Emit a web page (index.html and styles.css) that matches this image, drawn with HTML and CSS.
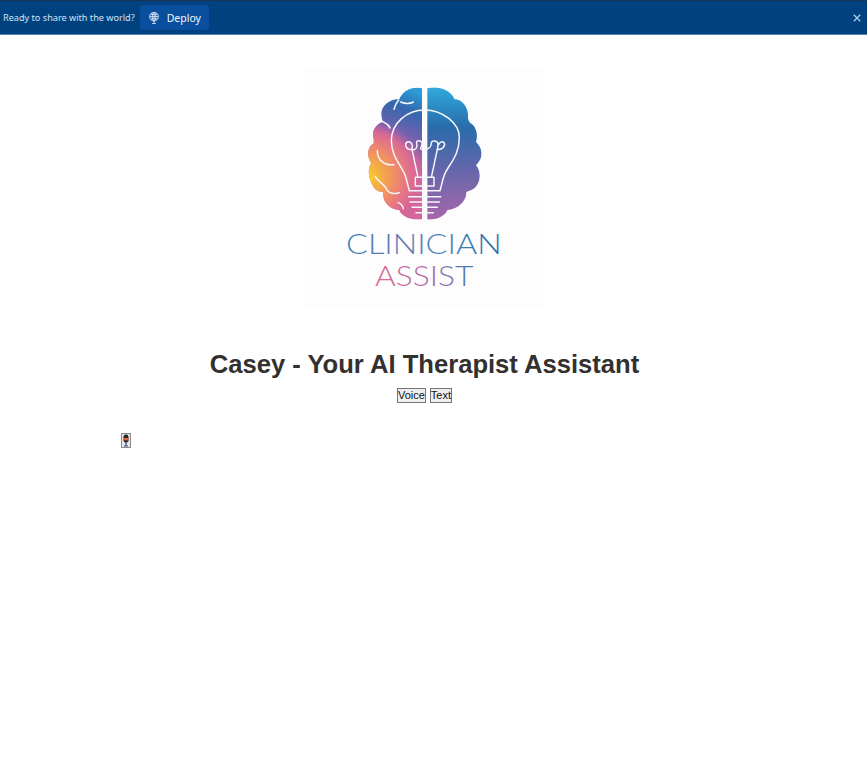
FILE: index.html
```html
<!DOCTYPE html>
<html lang="en">
<head>
<meta charset="utf-8">
<title>Casey - Your AI Therapist Assistant</title>
<link rel="stylesheet" href="styles.css">
</head>
<body>
<header class="deploy-bar">
  <span class="deploy-text">Ready to share with the world?</span>
  <button class="deploy-btn" type="button">
    <svg class="deploy-icon" viewBox="0 0 12 12" aria-hidden="true">
      <circle cx="6" cy="4.6" r="4.4"/>
      <ellipse cx="6" cy="4.6" rx="1.8" ry="4.4"/>
      <path d="M1.6 4.6h8.8M2.4 2.4h7.2M2.4 6.8h7.2M6 .2V11.6M4 11.6h4"/>
    </svg>
    <span>Deploy</span>
  </button>
  <button class="close-btn" type="button" aria-label="Close">
    <svg viewBox="0 0 8 8" aria-hidden="true"><path d="M.8.8l6.4 6.4M7.2.8L.8 7.2"/></svg>
  </button>
</header>
<main class="page">
  <svg class="logo" viewBox="12 18 723 723" role="img" aria-label="Clinician Assist logo">
    <defs>
      <linearGradient id="base" x1="0" y1="85" x2="0" y2="478" gradientUnits="userSpaceOnUse">
        <stop offset="0" stop-color="#2fa9dc"/>
        <stop offset=".3" stop-color="#2a6bab"/>
        <stop offset=".65" stop-color="#6a66aa"/>
        <stop offset="1" stop-color="#a866ac"/>
      </linearGradient>
      <radialGradient id="warm" cx="205" cy="350" r="170" gradientUnits="userSpaceOnUse">
        <stop offset="0" stop-color="#f9d31e"/>
        <stop offset=".16" stop-color="#f6b63c"/>
        <stop offset=".5" stop-color="#ef8a6a"/>
        <stop offset=".8" stop-color="#dd6a92" stop-opacity=".92"/>
        <stop offset="1" stop-color="#c8659f" stop-opacity="0"/>
      </radialGradient>
      <linearGradient id="leftTop" x1="335" y1="90" x2="255" y2="290" gradientUnits="userSpaceOnUse">
        <stop offset="0" stop-color="#2a9bd4"/>
        <stop offset=".28" stop-color="#3467ad"/>
        <stop offset=".65" stop-color="#7c60b0"/>
        <stop offset="1" stop-color="#d3669a"/>
      </linearGradient>
      <linearGradient id="word1" x1="138" y1="0" x2="605" y2="0" gradientUnits="userSpaceOnUse">
        <stop offset="0" stop-color="#3f7fb5"/>
        <stop offset=".35" stop-color="#6a78b4"/>
        <stop offset=".65" stop-color="#4f86b8"/>
        <stop offset="1" stop-color="#2a6ba6"/>
      </linearGradient>
      <linearGradient id="word2" x1="225" y1="0" x2="520" y2="0" gradientUnits="userSpaceOnUse">
        <stop offset="0" stop-color="#e0688f"/>
        <stop offset=".5" stop-color="#b46aa8"/>
        <stop offset="1" stop-color="#3f7fb5"/>
      </linearGradient>
      <clipPath id="brainClip">
        <path d="M366 85C336 78 308 92 298 118C272 116 244 135 244 162C244 172 246 180 250 186C230 190 214 212 220 232C222 240 222 246 220 252C204 258 198 288 214 310C204 322 202 352 220 380C228 392 240 396 250 396C246 425 268 448 298 450C304 468 330 482 366 478Z"/>
        <path d="M382 85C410 78 448 84 464 118C486 118 506 142 504 172C504 178 506 182 510 188C526 196 536 220 528 246C546 262 554 290 528 316C546 335 542 378 514 390C508 392 504 394 499 396C500 425 472 448 442 450C438 466 410 482 382 478Z"/>
      </clipPath>
    </defs>
    <rect class="logo-bg" x="12" y="18" width="723" height="723"/>
    <g clip-path="url(#brainClip)">
      <rect x="372" y="70" width="190" height="420" fill="url(#base)"/>
      <rect x="190" y="70" width="183" height="420" fill="url(#leftTop)"/>
      <rect x="190" y="170" width="183" height="320" fill="url(#warm)"/>
    </g>
    <g class="logo-line">
      <path d="M374 150C320 150 274 190 274 242C274 285 298 310 312 338C320 355 322 372 328 392H420C426 372 428 355 436 338C450 310 478 285 478 232C478 190 428 150 374 150Z"/>
      <path d="M346 378V352H402V378H346ZM354 352L336 268M394 352L412 268"/>
      <path d="M336 268C318 272 312 252 322 246C334 242 340 256 336 268C346 272 354 262 350 250C346 238 370 240 366 254C362 268 356 268 372 268C384 268 394 262 394 250C394 240 414 240 414 254C412 264 414 270 412 268C426 272 438 256 432 248C424 240 412 252 412 268"/>
      <path d="M326 410H422M330 426H418M336 442H412M348 458H400"/>
      <path d="M302 126C316 132 326 134 340 126M296 120C288 130 284 138 282 148M250 186C258 190 266 192 270 204M232 272C232 298 250 318 282 314M226 350C236 368 256 372 262 392C272 402 288 402 298 398M294 428C300 430 308 434 310 446"/>
    </g>
    <text class="logo-word" x="138" y="581" fill="url(#word1)" textLength="467" lengthAdjust="spacingAndGlyphs">CLINICIAN</text>
    <text class="logo-word" x="225" y="677" fill="url(#word2)" textLength="295" lengthAdjust="spacingAndGlyphs">ASSIST</text>
  </svg>
  <h1 class="title">Casey - Your AI Therapist Assistant</h1>
  <div class="mode-row">
    <button class="native-btn" type="button">Voice</button>
    <button class="native-btn" type="button">Text</button>
  </div>
  <div class="voice-panel">
    <button class="mic-btn" type="button" aria-label="Record">
      <svg viewBox="0 0 8 13" aria-hidden="true">
        <rect class="mic-head" x="1.5" y=".5" width="5" height="8" rx="2.2"/>
        <rect class="mic-band" x="1.5" y="4" width="5" height="2.4"/>
        <path class="mic-stand" d="M4 8V12M2 12H6"/>
      </svg>
    </button>
  </div>
</main>
</body>
</html>
```
FILE: styles.css
```css
* { box-sizing: border-box; }
html, body { margin: 0; padding: 0; background: #fff; }
body { min-height: 784px; font-family: "Liberation Sans", Arial, sans-serif; }

.deploy-bar {
  display: flex;
  align-items: center;
  height: 35px;
  padding: 0 0 0 3px;
  background: #004280;
  border-top: 1px solid #1d3354;
  border-bottom: 1px solid #4f86b8;
  font-family: "Noto Sans", sans-serif;
}
.deploy-text { color: #cfe4f7; font-size: 9.15px; line-height: 1; white-space: nowrap; }
.deploy-btn {
  display: flex;
  align-items: center;
  gap: 7px;
  height: 25px;
  margin-left: 5px;
  padding: 0 8px;
  border: 0;
  border-radius: 3px;
  background: #0a4f9d;
  color: #f2f7fc;
  font-family: inherit;
  font-size: 10.5px;
}
.deploy-icon { width: 12px; height: 12px; fill: none; stroke: #e8f1fa; stroke-width: .8; }
.close-btn {
  display: flex;
  margin-left: auto;
  margin-right: 6px;
  padding: 0;
  border: 0;
  background: none;
}
.close-btn svg { width: 8px; height: 8px; fill: none; stroke: #a9cdee; stroke-width: 1.3; }

.page { display: flex; flex-direction: column; align-items: center; padding: 31px 18px 0 0; }
.logo { display: block; width: 241px; height: 241px; }
.logo-bg { fill: #fdfdfe; }
.logo-line { fill: none; stroke: #f8f8fb; stroke-width: 4.4; stroke-linecap: round; stroke-linejoin: round; }
.logo-word { font-family: Lato, "Open Sans", sans-serif; font-weight: 300; font-size: 80px; stroke: currentColor; stroke-width: 0; }

.title {
  margin: 42px 0 0;
  color: #333130;
  font-size: 25.6px;
  line-height: 30px;
  font-weight: 700;
}
.mode-row { display: flex; gap: 4px; margin-top: 9px; }
.native-btn {
  height: 15px;
  padding: 0;
  border: 1px solid #767676;
  background: #efefef;
  color: #111;
  font-family: "Liberation Sans", Arial, sans-serif;
  font-size: 11px;
  line-height: 13px;
}
.voice-panel { align-self: stretch; padding: 30px 0 0 121px; }
.mic-btn {
  display: flex;
  align-items: center;
  justify-content: center;
  width: 10px;
  height: 15px;
  padding: 0;
  border: 1px solid #8a8a8a;
  background: #e6e6e6;
}
.mic-btn svg { width: 8px; height: 13px; }
.mic-head { fill: #26262e; }
.mic-band { fill: #d9662e; }
.mic-stand { fill: none; stroke: #334a7a; stroke-width: 1.2; }
```
